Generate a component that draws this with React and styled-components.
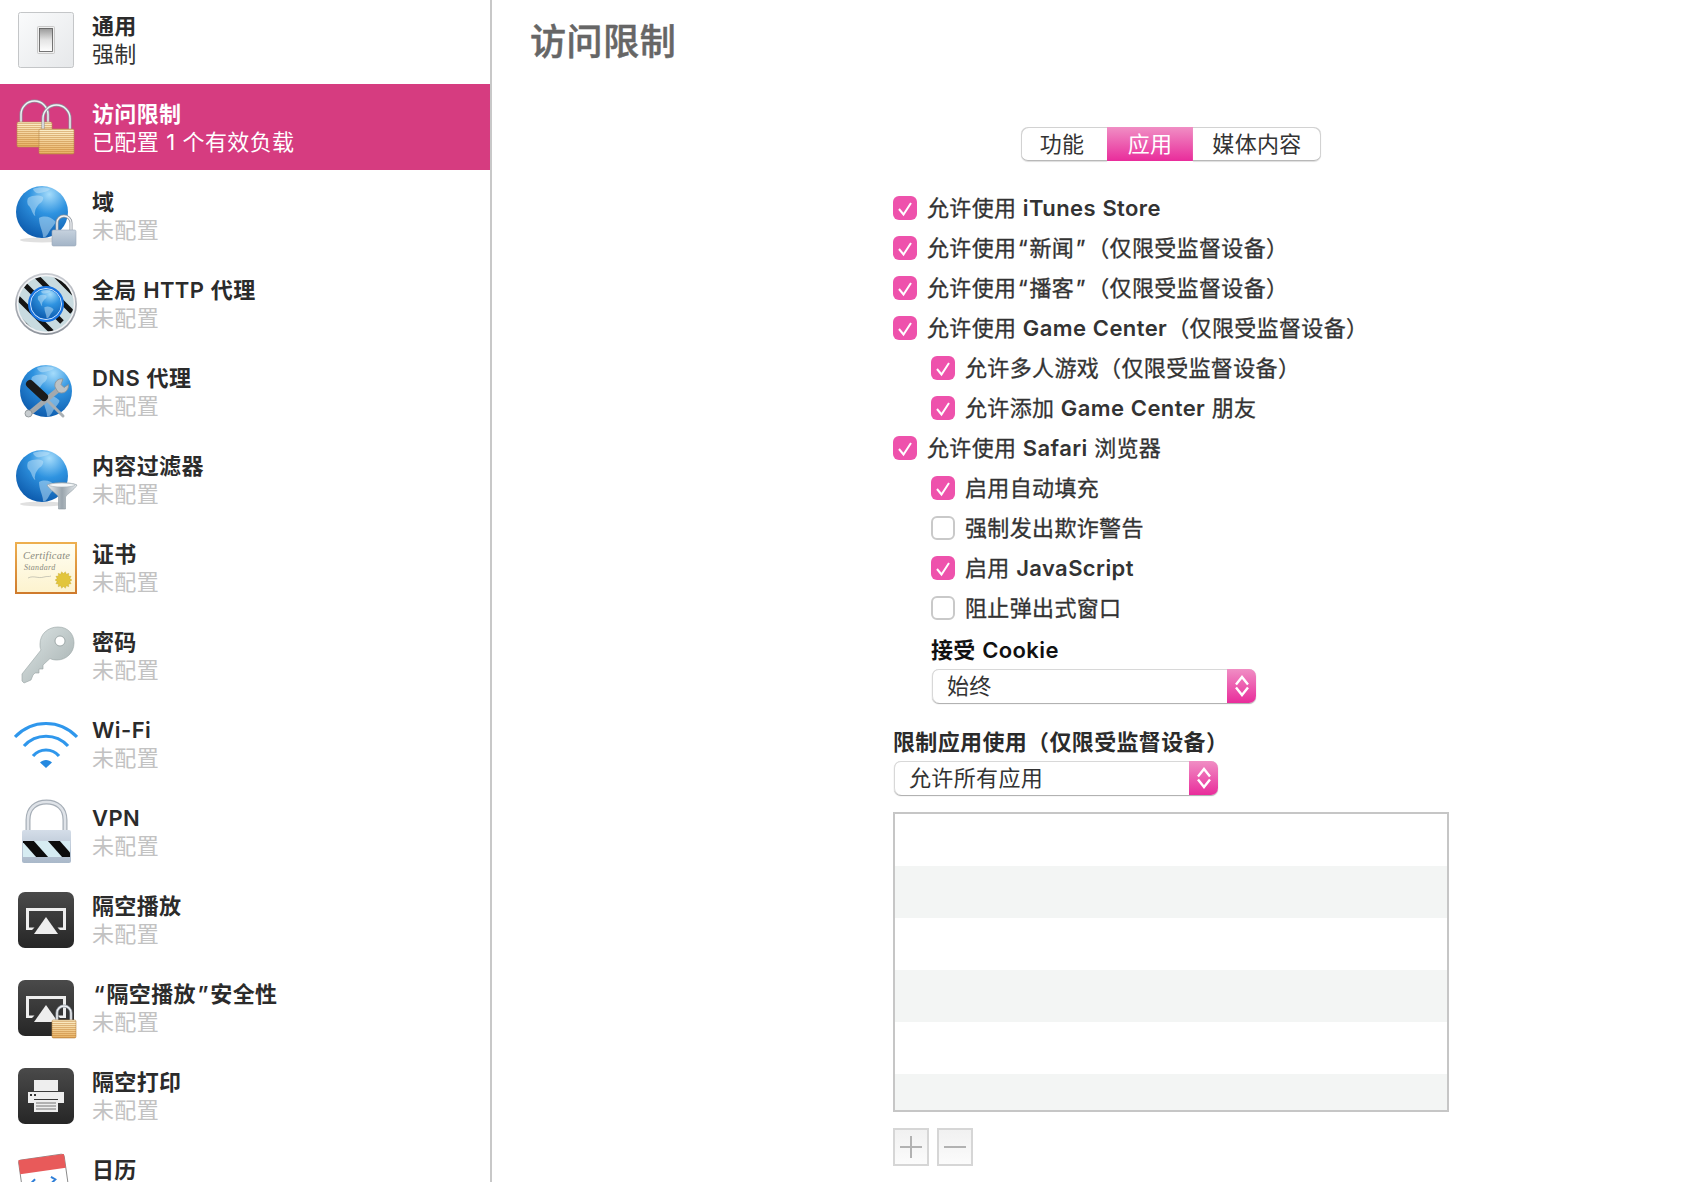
import React from 'react';
import styled, { createGlobalStyle } from 'styled-components';

const GlobalStyle = createGlobalStyle`
  html, body {
    margin: 0;
    padding: 0;
    height: 100%;
    background: #fff;
    font-family: Inter, "Noto Sans CJK SC", sans-serif;
    letter-spacing: 0.35px;
    text-spacing-trim: space-all;
  }
`;

const Page = styled.div`
  display: flex;
  height: 100vh;
  overflow: hidden;
  color: #333;
`;

const Sidebar = styled.div`
  width: 490px;
  flex-shrink: 0;
  border-right: 2px solid #c8c8c8;
  display: flex;
  flex-direction: column;
  gap: 2px;
  margin-top: -4px;
`;

const Row = styled.div`
  height: 86px;
  flex-shrink: 0;
  display: flex;
  align-items: center;
  gap: 14px;
  padding-left: 14px;
  background: ${({ $active }) => ($active ? '#d63c80' : 'transparent')};
`;

const IconSvg = styled.svg`
  width: 64px;
  height: 64px;
  flex-shrink: 0;
  display: block;
`;

const RowText = styled.div`
  display: flex;
  flex-direction: column;
  padding-top: 2px;
  font-size: 22px;
  line-height: 28px;
  white-space: nowrap;
`;

const RowTitle = styled.div`
  font-weight: 600;
  color: ${({ $active }) => ($active ? '#fff' : '#2b2b2b')};
`;

const RowSub = styled.div`
  color: ${({ $active, $set }) => ($active ? '#fff' : $set ? '#333' : '#c2c2c2')};
`;

const LatinRun = styled.span`
  white-space: pre;
  letter-spacing: 0.4px;
  word-spacing: 0.5px;
  font-weight: ${({ $strong }) => ($strong ? 600 : 'inherit')};
  -webkit-text-stroke: ${({ $strong }) => ($strong ? '0' : 'inherit')};
`;

const QuoteMark = styled.span`
  padding: 0 1.5px;
`;

const Main = styled.div`
  flex: 1;
  padding: 17px 0 0 38px;
`;

const Title = styled.h1`
  margin: 0;
  font-size: 36px;
  line-height: 50px;
  font-weight: 500;
  letter-spacing: 0.6px;
  color: #666;
  -webkit-text-stroke: 0.5px #666;
`;

const Form = styled.div`
  width: 556px;
  margin: 60px 0 0 363px;
`;

const Tabs = styled.div`
  display: flex;
  justify-content: center;
`;

const Tab = styled.div`
  height: 34px;
  width: ${({ $wide }) => ($wide ? '128px' : '86px')};
  box-sizing: border-box;
  display: flex;
  align-items: center;
  justify-content: center;
  font-size: 22px;
  line-height: 28px;
  color: ${({ $active }) => ($active ? '#fff' : '#333')};
  background: ${({ $active }) => ($active ? 'linear-gradient(#f08ec4, #e92c9b)' : '#fff')};
  box-shadow: ${({ $active }) => ($active ? 'none' : 'inset 0 1px 0 #d2d2d2, inset 0 -1px 0 #b8b8b8, 0 1px 1px #ddd')};

  &:first-child {
    padding-right: 4px;
    border-radius: 7px 0 0 7px;
    box-shadow: inset 1px 1px 0 #d2d2d2, inset 0 -1px 0 #b8b8b8, 0 1px 1px #ddd;
  }

  &:last-child {
    border-radius: 0 7px 7px 0;
    box-shadow: inset -1px 1px 0 #d2d2d2, inset 0 -1px 0 #b8b8b8, 0 1px 1px #ddd;
  }
`;

const Checks = styled.div`
  margin-top: 27px;
`;

const CheckRow = styled.div`
  height: 40px;
  display: flex;
  align-items: center;
  gap: 10px;
  padding-left: ${({ $nested }) => ($nested ? '38px' : '0')};
`;

const CheckText = styled.div`
  font-size: 22px;
  line-height: 28px;
  color: #333;
  white-space: nowrap;
  -webkit-text-stroke: 0.3px #333;
`;

const Box = styled.div`
  width: 24px;
  height: 24px;
  box-sizing: border-box;
  border-radius: 6px;
  flex-shrink: 0;
  background: ${({ $on }) => ($on ? '#ee52ac' : '#fff')};
  border: ${({ $on }) => ($on ? 'none' : '2px solid #c9c9c9')};
`;

const Label = styled.div`
  font-size: 22px;
  line-height: 28px;
  font-weight: 600;
  color: ${({ $dark }) => ($dark ? '#111' : '#2b2b2b')};
  margin: ${({ $nested }) => ($nested ? '8px 0 5px 38px' : '25px 0 5px 0')};
`;

const Select = styled.div`
  width: 324px;
  height: 34px;
  box-sizing: border-box;
  margin-left: ${({ $nested }) => ($nested ? '39px' : '1px')};
  display: flex;
  align-items: center;
  justify-content: space-between;
  padding-left: 15px;
  font-size: 22px;
  line-height: 28px;
  color: #333;
  border-radius: 7px;
  box-shadow: inset 0 1px 0 #d8d8d8, inset 1px 0 0 #d8d8d8, 0 1px 1px #aaa;
`;

const SelectArrow = styled.div`
  width: 29px;
  height: 34px;
  border-radius: 0 7px 7px 0;
  background: linear-gradient(#f08ec4, #e92c9b);
  display: flex;
  align-items: center;
  justify-content: center;
`;

const List = styled.div`
  height: 300px;
  box-sizing: border-box;
  margin-top: 17px;
  border: 2px solid #c6c6c6;
  overflow: hidden;
`;

const ListRow = styled.div`
  height: 52px;
  background: #fff;

  &:nth-child(even) {
    background: #f3f5f4;
  }
`;

const Buttons = styled.div`
  display: flex;
  gap: 8px;
  margin-top: 16px;
`;

const SquareButton = styled.div`
  width: 36px;
  height: 38px;
  box-sizing: border-box;
  border: 2px solid #d6d6d6;
  background: linear-gradient(#f1f1f1, #fbfbfb);
  display: flex;
  align-items: center;
  justify-content: center;
`;

const Mixed = ({ text, strong }) =>
  text.split(/([“”]| ?[A-Za-z0-9][A-Za-z0-9\- ]*)/).map((part, i) => {
    if (part === '“' || part === '”') return <QuoteMark key={i}>{part}</QuoteMark>;
    if (/[A-Za-z0-9]/.test(part)) return <LatinRun key={i} $strong={strong}>{part}</LatinRun>;
    return part;
  });

const Svg = ({ children }) => <IconSvg viewBox="0 0 64 64">{children}</IconSvg>;

const Globe = ({ uid, cx, cy, r }) => (
  <g transform={`translate(${cx} ${cy}) scale(${r / 26})`}>
    <defs>
      <radialGradient id={`${uid}-sphere`} cx="0.64" cy="0.16" r="0.9">
        <stop offset="0" stopColor="#a5dcfb" />
        <stop offset="0.42" stopColor="#2f93e0" />
        <stop offset="1" stopColor="#0b58aa" />
      </radialGradient>
      <clipPath id={`${uid}-clip`}>
        <circle r="26" />
      </clipPath>
    </defs>
    <circle r="26" fill={`url(#${uid}-sphere)`} />
    <g clipPath={`url(#${uid}-clip)`} fill="#c4e4f7" opacity="0.5">
      <path d="M-9-23C-4-25 4-25 8-23 6-20 1-20-2-19-5-18-8-20-9-23Z" />
      <path d="M-14-14C-9-17-3-17 1-15 2-12-1-9-3-8-5-5-7-3-7 0-8 2-6 3-7 4-10 2-10-4-14-7-15-9-15-12-14-14Z" />
      <path d="M-3 6C3 3 9 5 13 9 15 11 9 16 7 20 5 24 3 26 1 25 1 19-3 14-3 6Z" />
    </g>
  </g>
);

const Padlock = ({ uid, x, y, w, h, top, inset, gold }) => {
  const r = (w - inset * 2) / 2;
  const bow = `M${x + inset} ${y}V${top + r}A${r} ${r} 0 0 1 ${x + w - inset} ${top + r}V${y}`;
  return (
    <g>
      <defs>
        <linearGradient id={`${uid}-body`} x1="0" y1="0" x2="0" y2="1">
          <stop offset="0" stopColor={gold ? '#fdf0cc' : '#c6d2de'} />
          <stop offset="1" stopColor={gold ? '#e8b163' : '#a3b4c7'} />
        </linearGradient>
        <pattern id={`${uid}-lines`} width="2" height="2" patternUnits="userSpaceOnUse">
          <rect width="2" height="1" fill="#b9772c" opacity="0.42" />
        </pattern>
      </defs>
      <path d={bow} fill="none" stroke="#8f969e" strokeWidth="3" />
      <path d={bow} fill="none" stroke="#f1f3f6" strokeWidth="1.4" />
      <rect x={x} y={y} width={w} height={h} rx="1.5" fill={`url(#${uid}-body)`} stroke={gold ? '#b98a4a' : '#9aa9ba'} strokeWidth="0.6" />
      {gold && <rect x={x} y={y} width={w} height={h} rx="1.5" fill={`url(#${uid}-lines)`} />}
    </g>
  );
};

const DarkTile = ({ uid }) => (
  <>
    <defs>
      <linearGradient id={uid} x1="0" y1="0" x2="0" y2="1">
        <stop offset="0" stopColor="#4a4a4a" />
        <stop offset="1" stopColor="#262626" />
      </linearGradient>
    </defs>
    <rect x="4" y="5" width="56" height="56" rx="7" fill={`url(#${uid})`} />
  </>
);

const AirplayArt = () => (
  <>
    <path d="M12 21H52V43H46L43.500 40.500H49V24H15V40.500H20.500L18 43H12Z" fill="#eee" />
    <path d="M32 30L44 47H20Z" fill="#eee" />
  </>
);

const SwitchIcon = () => (
  <Svg>
    <defs>
      <linearGradient id="sw-b" x1="0" y1="0" x2="1" y2="1">
        <stop offset="0" stopColor="#fafbfc" />
        <stop offset="1" stopColor="#e6e8ea" />
      </linearGradient>
      <linearGradient id="sw-t" x1="0" y1="0" x2="0" y2="1">
        <stop offset="0" stopColor="#9a9a9a" />
        <stop offset="0.5" stopColor="#e4e4e4" />
        <stop offset="1" stopColor="#fff" />
      </linearGradient>
    </defs>
    <rect x="4.500" y="5.500" width="55" height="55" rx="2" fill="url(#sw-b)" stroke="#c4c6c8" />
    <rect x="23.500" y="19.500" width="17" height="27" rx="1" fill="#f0f0f0" stroke="#c9c9c9" />
    <rect x="25.500" y="21.500" width="13" height="23" fill="url(#sw-t)" stroke="#555" strokeWidth="0.8" />
  </Svg>
);

const LocksIcon = () => (
  <Svg>
    <Padlock uid="lk-a" x={3} y={27} w={35} h={25} top={6} inset={4} gold />
    <Padlock uid="lk-b" x={25} y={34} w={35} h={25} top={10} inset={4} gold />
  </Svg>
);

const DomainIcon = () => (
  <Svg>
    <ellipse cx="28" cy="57" rx="22" ry="2.500" fill="#000" opacity="0.12" />
    <Globe uid="dm" cx={28} cy={29} r={26} />
    <Padlock uid="dm-l" x={38} y={47} w={24} h={16} top={33} inset={5} />
  </Svg>
);

const ProxyIcon = () => (
  <Svg>
    <defs>
      <linearGradient id="px-r" x1="0" y1="0" x2="0" y2="1">
        <stop offset="0" stopColor="#c9ccd2" />
        <stop offset="1" stopColor="#8f949c" />
      </linearGradient>
      <clipPath id="px-c">
        <circle cx="32" cy="33" r="27.500" />
      </clipPath>
    </defs>
    <circle cx="32" cy="33" r="31" fill="url(#px-r)" />
    <circle cx="32" cy="33" r="28.500" fill="#c8dbe0" stroke="#f2f3f5" strokeWidth="1.500" />
    <g clipPath="url(#px-c)" stroke="#141414" strokeWidth="5">
      <path d="M-6 17L38 61M4 7L48 51M14-3L58 41M24-13L68 31M-16 27L28 71" />
    </g>
    <circle cx="32" cy="33" r="18" fill="#1873e0" />
    <circle cx="32" cy="33" r="15.500" fill="#1873e0" stroke="#cfe6fb" strokeWidth="1" />
    <Globe uid="px" cx={32} cy={33} r={14.500} />
  </Svg>
);

const DnsIcon = () => (
  <Svg>
    <Globe uid="dn" cx={32} cy={32} r={26} />
    <path d="M44 31L16 54" fill="none" stroke="#a3a9ad" strokeWidth="5" strokeLinecap="round" />
    <circle cx="14.500" cy="54.500" r="3.500" fill="#c8cdd0" stroke="#858b8f" strokeWidth="0.8" />
    <path d="M49 20C44 19 40 23 41 28L44 33C49 36 55 32 54.500 25.500L50 28.500 47 25.500Z" fill="#bcc2c5" stroke="#8a9094" strokeWidth="0.8" />
    <path d="M30 38L49 57" stroke="#a9afb3" strokeWidth="3" strokeLinecap="round" />
    <path d="M16 25L30 38" stroke="#1b1b1b" strokeWidth="8" strokeLinecap="round" />
  </Svg>
);

const FilterIcon = () => (
  <Svg>
    <defs>
      <linearGradient id="funnel" x1="0" y1="0" x2="1" y2="0">
        <stop offset="0" stopColor="#eef2f4" />
        <stop offset="0.5" stopColor="#9aa5ad" />
        <stop offset="1" stopColor="#e7ebee" />
      </linearGradient>
    </defs>
    <ellipse cx="28" cy="57" rx="22" ry="2.500" fill="#000" opacity="0.12" />
    <Globe uid="fl" cx={28} cy={29} r={26} />
    <path d="M33 38C38 35 58 35 63 38 60 43 53 47 51.500 50V62H44.500V50C43 47 36 43 33 38Z" fill="url(#funnel)" stroke="#8d989f" strokeWidth="0.6" />
    <ellipse cx="48" cy="38" rx="13" ry="2" fill="#f6f8f9" stroke="#a3adb4" strokeWidth="0.6" />
  </Svg>
);

const sealPoints = Array.from({ length: 28 }, (_, i) => {
  const a = (i * Math.PI) / 14;
  const r = i % 2 ? 6.5 : 8.5;
  return `${(49.5 + r * Math.cos(a)).toFixed(2)},${(45 + r * Math.sin(a)).toFixed(2)}`;
}).join(' ');

const CertIcon = () => (
  <Svg>
    <defs>
      <linearGradient id="ct-f" x1="0" y1="0" x2="0" y2="1">
        <stop offset="0" stopColor="#eeb050" />
        <stop offset="1" stopColor="#cf7a2c" />
      </linearGradient>
      <linearGradient id="ct-p" x1="0" y1="0" x2="0" y2="1">
        <stop offset="0" stopColor="#fffef2" />
        <stop offset="1" stopColor="#fdf3cf" />
      </linearGradient>
    </defs>
    <rect x="1" y="7" width="62" height="52" fill="url(#ct-f)" />
    <rect x="3" y="9" width="58" height="48" fill="url(#ct-p)" />
    <text x="9" y="24" fontFamily="Liberation Serif, serif" fontStyle="italic" fontSize="10.500" letterSpacing="0.2" fill="#8a8a80">Certificate</text>
    <text x="10" y="35" fontFamily="Liberation Serif, serif" fontStyle="italic" fontSize="8" letterSpacing="0.3" fill="#8a8a80">Standard</text>
    <path d="M14 43C20 40 24 44 30 42 33 41 35 42 37 41" fill="none" stroke="#b5b5a8" strokeWidth="0.7" />
    <polygon points={sealPoints} fill="#e2c53c" stroke="#b99a22" strokeWidth="0.3" />
  </Svg>
);

const KeyIcon = () => (
  <Svg>
    <defs>
      <linearGradient id="ky-g" x1="0" y1="0" x2="1" y2="1">
        <stop offset="0" stopColor="#dfe7e7" />
        <stop offset="1" stopColor="#a3aeae" />
      </linearGradient>
    </defs>
    <path d="M44 4C54 4 60 11 60 20 60 30 52 37 43 37 40 37 38 36.500 36 35.500L29 42V46H25V50H21L19 52 17 57 10 60 8 58 8 51 27 27C26 25 26 23 26 21 26 11 34 4 44 4Z" fill="url(#ky-g)" stroke="#97a2a2" strokeWidth="0.6" />
    <circle cx="46" cy="18" r="5" fill="#fff" stroke="#8f9a9a" strokeWidth="0.8" />
  </Svg>
);

const WifiIcon = () => (
  <Svg>
    <g fill="none" stroke="#2f97ec" strokeWidth="3.200">
      <path d="M1 26C18 8 46 8 63 26" />
      <path d="M10 35C22 22 42 22 54 35" />
      <path d="M19 45C26 37 38 37 45 45" />
    </g>
    <path d="M26 51.500C29 48 35 48 38 51.500L32 57Z" fill="#2589e0" />
  </Svg>
);

const VpnIcon = () => (
  <Svg>
    <defs>
      <linearGradient id="vp-b" x1="0" y1="0" x2="0" y2="1">
        <stop offset="0" stopColor="#d4dde8" />
        <stop offset="1" stopColor="#a9b8c9" />
      </linearGradient>
      <clipPath id="vp-c">
        <rect x="9" y="42" width="47" height="16" />
      </clipPath>
    </defs>
    <path d="M14 32V21C14 9 22 3 32.500 3S51 9 51 21V32" fill="none" stroke="#a5adb6" strokeWidth="5" />
    <path d="M14 32V21C14 9 22 3 32.500 3S51 9 51 21V32" fill="none" stroke="#dfe3e8" strokeWidth="2.600" />
    <rect x="8" y="31" width="49" height="33" rx="2" fill="url(#vp-b)" />
    <rect x="9" y="42" width="47" height="16" fill="#d6ecf2" />
    <g clipPath="url(#vp-c)" fill="#0c0c0c">
      <path d="M7 41H19L35 59H23Z" />
      <path d="M33 41H45L61 59H49Z" />
    </g>
  </Svg>
);

const AirplayIcon = () => (
  <Svg>
    <DarkTile uid="ap-t" />
    <AirplayArt />
  </Svg>
);

const AirplayLockIcon = () => (
  <Svg>
    <DarkTile uid="as-t" />
    <AirplayArt />
    <Padlock uid="as-l" x={38} y={45} w={24} h={18} top={31} inset={5} gold />
  </Svg>
);

const PrintIcon = () => (
  <Svg>
    <DarkTile uid="pr-t" />
    <rect x="20" y="17" width="24" height="11" fill="#eee" />
    <path d="M14 29H50V40H44V36H20V40H14Z" fill="#eee" />
    <rect x="16" y="31" width="2" height="2" fill="#333" />
    <rect x="20" y="31" width="2" height="2" fill="#333" />
    <rect x="20" y="37" width="24" height="12" fill="#eee" />
    <path d="M22 40H42M22 43H42M22 46H42" stroke="#555" strokeWidth="0.8" />
  </Svg>
);

const CalendarIcon = () => (
  <Svg>
    <g transform="rotate(-8 30 34)">
      <rect x="8" y="6" width="46" height="56" rx="3" fill="#fff" stroke="#8b8b8b" />
      <rect x="8" y="6" width="46" height="14" fill="#e85a5a" />
      <path d="M22 27L18 30 22 33M38 27L42 30 38 33" fill="none" stroke="#2f7fd8" strokeWidth="2" />
    </g>
  </Svg>
);

const profiles = [
  { icon: SwitchIcon, title: '通用', sub: '强制', set: true },
  { icon: LocksIcon, title: '访问限制', sub: '已配置 1 个有效负载', active: true },
  { icon: DomainIcon, title: '域' },
  { icon: ProxyIcon, title: '全局 HTTP 代理' },
  { icon: DnsIcon, title: 'DNS 代理' },
  { icon: FilterIcon, title: '内容过滤器' },
  { icon: CertIcon, title: '证书' },
  { icon: KeyIcon, title: '密码' },
  { icon: WifiIcon, title: 'Wi-Fi' },
  { icon: VpnIcon, title: 'VPN' },
  { icon: AirplayIcon, title: '隔空播放' },
  { icon: AirplayLockIcon, title: '“隔空播放”安全性' },
  { icon: PrintIcon, title: '隔空打印' },
  { icon: CalendarIcon, title: '日历' },
];

const checks = [
  { label: '允许使用 iTunes Store', on: true },
  { label: '允许使用“新闻”（仅限受监督设备）', on: true },
  { label: '允许使用“播客”（仅限受监督设备）', on: true },
  { label: '允许使用 Game Center（仅限受监督设备）', on: true },
  { label: '允许多人游戏（仅限受监督设备）', on: true, nested: true },
  { label: '允许添加 Game Center 朋友', on: true, nested: true },
  { label: '允许使用 Safari 浏览器', on: true },
  { label: '启用自动填充', on: true, nested: true },
  { label: '强制发出欺诈警告', nested: true },
  { label: '启用 JavaScript', on: true, nested: true },
  { label: '阻止弹出式窗口', nested: true },
];

const Check = ({ on }) => (
  <Box $on={on}>
    {on && (
      <svg width="24" height="24" viewBox="0 0 24 24" fill="none" stroke="#fff" strokeWidth="2">
        <path d="M6 13L10.500 18.500 18 7" />
      </svg>
    )}
  </Box>
);

const Chevrons = () => (
  <svg width="16" height="24" viewBox="0 0 16 24" fill="none" stroke="#fff" strokeWidth="2.400">
    <path d="M2 10.500L8 3 14 10.500M2 13.500L8 21 14 13.500" />
  </svg>
);

const App = () => (
  <>
    <GlobalStyle />
    <Page>
      <Sidebar>
        {profiles.map(({ icon: Icon, title, sub, set, active }) => (
          <Row key={title} $active={active}>
            <Icon />
            <RowText>
              <RowTitle $active={active}><Mixed text={title} /></RowTitle>
              <RowSub $active={active} $set={set}><Mixed text={sub || '未配置'} /></RowSub>
            </RowText>
          </Row>
        ))}
      </Sidebar>
      <Main>
        <Title>访问限制</Title>
        <Form>
          <Tabs>
            <Tab>功能</Tab>
            <Tab $active>应用</Tab>
            <Tab $wide>媒体内容</Tab>
          </Tabs>
          <Checks>
            {checks.map(({ label, on, nested }) => (
              <CheckRow key={label} $nested={nested}>
                <Check on={on} />
                <CheckText><Mixed text={label} strong /></CheckText>
              </CheckRow>
            ))}
          </Checks>
          <Label $nested $dark><Mixed text="接受 Cookie" /></Label>
          <Select $nested>
            始终
            <SelectArrow><Chevrons /></SelectArrow>
          </Select>
          <Label>限制应用使用（仅限受监督设备）</Label>
          <Select>
            允许所有应用
            <SelectArrow><Chevrons /></SelectArrow>
          </Select>
          <List>
            {[0, 1, 2, 3, 4, 5].map((n) => <ListRow key={n} />)}
          </List>
          <Buttons>
            <SquareButton>
              <svg width="22" height="22" viewBox="0 0 22 22" stroke="#b2b2b2" strokeWidth="2">
                <path d="M0 11H22M11 0V22" />
              </svg>
            </SquareButton>
            <SquareButton>
              <svg width="22" height="22" viewBox="0 0 22 22" stroke="#b2b2b2" strokeWidth="2">
                <path d="M0 11H22" />
              </svg>
            </SquareButton>
          </Buttons>
        </Form>
      </Main>
    </Page>
  </>
);

export default App;
